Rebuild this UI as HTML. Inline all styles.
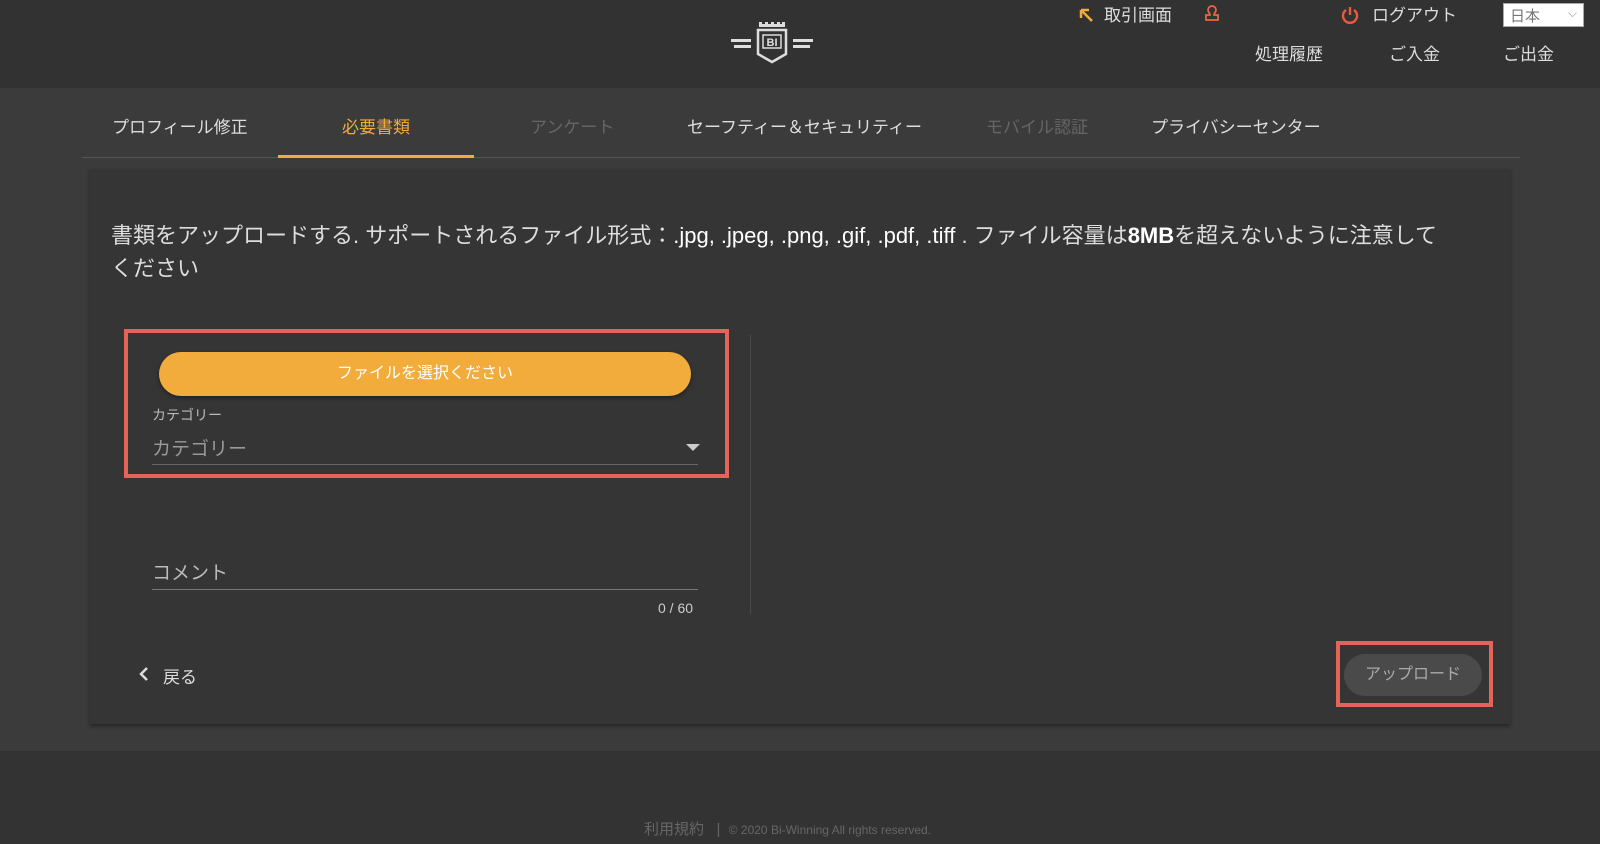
<!DOCTYPE html>
<html><head><meta charset="utf-8">
<style>
*{margin:0;padding:0;box-sizing:border-box}
body{width:1600px;height:844px;background:#3b3b3b;font-family:"Liberation Sans","Noto Sans CJK JP",sans-serif;color:#ddd;position:relative;overflow:hidden}
.a{position:absolute;white-space:nowrap}
header{position:absolute;left:0;top:0;width:1600px;height:88px;background:#323232}
.foot{position:absolute;left:0;top:751px;width:1600px;height:93px;background:#333}
.tab{position:absolute;top:113px;font-size:17px;color:#ddd}
.card{position:absolute;left:90px;top:169px;width:1420px;height:555px;background:#353535;box-shadow:0 2px 4px rgba(0,0,0,.4)}
</style></head><body>
<header>
<svg class="a" style="left:731px;top:22px" width="82" height="42" viewBox="0 0 82 42">
<g fill="#ddd"><rect x="0" y="17" width="20" height="3"/><rect x="3" y="23" width="17" height="3"/><rect x="62" y="17" width="20" height="3"/><rect x="62" y="23" width="17" height="3"/>
<rect x="28" y="2" width="26" height="3"/><rect x="28" y="0" width="3" height="4"/><rect x="34" y="0" width="3" height="4"/><rect x="40" y="0" width="3" height="4"/><rect x="46" y="0" width="3" height="4"/><rect x="51" y="0" width="3" height="4"/></g>
<path d="M27 8 H55 V32 L41 40 L27 32 Z" fill="none" stroke="#ddd" stroke-width="2.5"/>
<rect x="32" y="13" width="18" height="13" fill="none" stroke="#ddd" stroke-width="1.5"/>
<text x="41" y="24" font-size="11" font-weight="bold" fill="#ddd" text-anchor="middle" font-family="Liberation Sans">BI</text>
</svg>
<svg class="a" style="left:1078px;top:7px" width="16" height="16" viewBox="0 0 16 16"><path d="M3 3 L14 14 M3 3 V11 M3 3 H11" stroke="#f2ac3c" stroke-width="2.5" fill="none"/></svg>
<div class="a" style="left:1104px;top:1px;font-size:17px;color:#ddd">取引画面</div>
<svg class="a" style="left:1202px;top:4px" width="20" height="20" viewBox="0 0 20 20"><path d="M10 2 a4 4 0 0 1 4 4 c0 2-2 3-2 5 h4 v5 H4 v-5 h4 c0-2-2-3-2-5 a4 4 0 0 1 4-4z" fill="none" stroke="#e8683f" stroke-width="1.8"/></svg>
<svg class="a" style="left:1340px;top:5px" width="20" height="20" viewBox="0 0 20 20"><path d="M6 5 A7 7 0 1 0 14 5" fill="none" stroke="#ec5a3c" stroke-width="2.4"/><path d="M10 2 V10" stroke="#ec5a3c" stroke-width="2.4"/></svg>
<div class="a" style="left:1372px;top:1px;font-size:17px">ログアウト</div>
<div class="a" style="left:1503px;top:3px;width:81px;height:24px;background:#fff;border:1px solid #aaa;color:#777;font-size:15px;padding:1px 0 0 6px">日本<span style="position:absolute;right:6px;top:2px;font-size:12px;color:#999">⌵</span></div>
<div class="a" style="left:1255px;top:40px;font-size:17px">処理履歴</div>
<div class="a" style="left:1389px;top:40px;font-size:17px">ご入金</div>
<div class="a" style="left:1503px;top:40px;font-size:17px">ご出金</div>
</header>
<div class="tab" style="left:112px">プロフィール修正</div>
<div class="tab" style="left:342px;color:#f2ac3c">必要書類</div>
<div class="tab" style="left:530px;color:#666">アンケート</div>
<div class="tab" style="left:687px">セーフティー＆セキュリティー</div>
<div class="tab" style="left:986px;color:#666">モバイル認証</div>
<div class="tab" style="left:1151px">プライバシーセンター</div>
<div class="a" style="left:82px;top:157px;width:1438px;height:1px;background:#555"></div>
<div class="a" style="left:278px;top:155px;width:196px;height:3px;background:#f2ac3c"></div>
<div class="card"></div>
<div class="a" style="left:111px;top:219px;font-size:22px;line-height:33px;color:#ddd;white-space:normal;width:1335px">書類をアップロードする. サポートされるファイル形式：<span style="color:#fff">.jpg, .jpeg, .png, .gif, .pdf, .tiff</span> . ファイル容量は<span style="color:#fff;font-weight:bold">8MB</span>を超えないように注意してください</div>
<div class="a" style="left:124px;top:329px;width:605px;height:149px;border:4px solid #e5645a"></div>
<div class="a" style="left:159px;top:352px;width:532px;height:44px;border-radius:22px;background:#f2ac3c;box-shadow:0 2px 4px rgba(0,0,0,.4);color:#fff;font-size:16px;text-align:center;line-height:44px">ファイルを選択ください</div>
<div class="a" style="left:152px;top:405px;font-size:14px;color:#bbb">カテゴリー</div>
<div class="a" style="left:152px;top:434px;font-size:19px;color:#999">カテゴリー</div>
<div class="a" style="left:686px;top:444px;width:0;height:0;border-left:7px solid transparent;border-right:7px solid transparent;border-top:7px solid #ccc"></div>
<div class="a" style="left:152px;top:464px;width:546px;height:1px;background:#666"></div>
<div class="a" style="left:750px;top:335px;width:1px;height:279px;background:#4a4a4a"></div>
<div class="a" style="left:152px;top:558px;font-size:19px;color:#bbb">コメント</div>
<div class="a" style="left:152px;top:589px;width:546px;height:1px;background:#777"></div>
<div class="a" style="left:658px;top:600px;font-size:14px;color:#ccc">0 / 60</div>
<svg class="a" style="left:138px;top:666px" width="12" height="16" viewBox="0 0 12 16"><path d="M9 2 L3 8 L9 14" fill="none" stroke="#ddd" stroke-width="2.5"/></svg>
<div class="a" style="left:163px;top:663px;font-size:17px">戻る</div>
<div class="a" style="left:1336px;top:641px;width:157px;height:66px;border:4px solid #e5645a"></div>
<div class="a" style="left:1344px;top:654px;width:138px;height:42px;border-radius:21px;background:#4a4a4a;color:#aaa;font-size:16px;text-align:center;line-height:42px">アップロード</div>
<div class="foot"></div>
<div class="a" style="left:644px;top:818px;font-size:15px;color:#666">利用規約 &nbsp;&nbsp;| &nbsp;<span style="font-size:12px">© 2020 Bi-Winning All rights reserved.</span></div>
</body></html>
